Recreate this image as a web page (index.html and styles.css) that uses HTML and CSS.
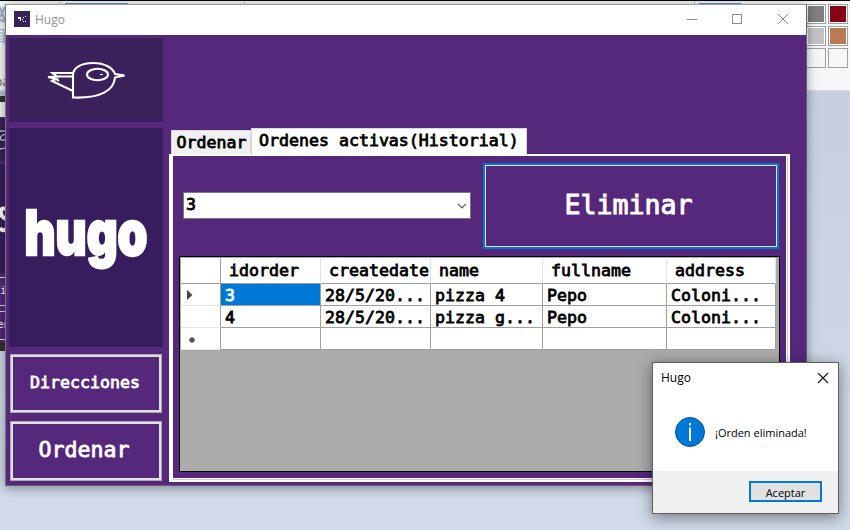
FILE: index.html
```html
<!DOCTYPE html>
<html lang="es">
<head>
<meta charset="utf-8">
<title>Hugo</title>
<link rel="stylesheet" href="styles.css">
</head>
<body>
<div class="desktop">
  <div class="ribbon">
    <svg class="ribbon-left" width="6" height="90" viewBox="0 0 6 90">
      <path d="M0 6l5 15M5 6L0 16M0 18l3 3" stroke="#9fb0cc" stroke-width="2" fill="none"/>
      <path d="M0 28.500h4v12H0M4 32.500h2M4 32v11h2M0 32h3M0 35h3M0 38h3" stroke="#9fb3d2" fill="none"/>
    </svg>
    <span class="ribbon-label">pa</span>
    <i class="strip strip-a"></i><i class="strip strip-b"></i>
    <i class="tick tick-a"></i><i class="tick tick-b"></i><i class="tick tick-c"></i>
    <div class="palette">
      <i class="gray"></i><i class="red"></i><i class="silver"></i><i class="brown"></i><i></i><i></i>
    </div>
  </div>
  <svg class="behind" width="6" height="260" viewBox="0 0 6 260">
    <rect width="6" height="6" fill="#b5c3d5"/><rect y="5" width="6" height="6" fill="#303437"/>
    <rect y="11" width="6" height="15" fill="#f2f2f2"/><rect y="26" width="6" height="225" fill="#55287d"/>
    <rect y="27" width="6" height="43" fill="#38205b"/><rect y="73" width="6" height="109" fill="#371c5d"/>
    <path d="M0 40h6M6 43Q-2 45 1 49H6M0 58q4 0 6-2" fill="none" stroke="#fff"/>
    <path d="M6 118q-6-2-5 4q0 4 5 6M0 137q3 4 6 1" fill="none" stroke="#fff" stroke-width="4"/>
    <path d="M0 186.500h6M0 214.500h6M0 220.500h6M0 248.500h6" stroke="#ddd"/>
    <text x="0" y="203" class="behind-text">i</text><text x="-3" y="237" class="behind-text">en</text>
    <rect y="251" width="6" height="9" fill="#303030"/>
  </svg>

  <main class="window">
    <header class="titlebar">
      <svg class="app-icon" width="16" height="16" viewBox="0 0 16 16"><rect width="16" height="16" fill="#38205b"/><path d="M4 6h3v4H6V8H4zM8 8h1v1H8zM9 6h1v1H9zM11 5h1v1h-1zM9 10h1v1H9zM11 10h1v1h-1z" fill="#fff"/></svg>
      <span class="title">Hugo</span>
      <svg class="controls" width="138" height="30" viewBox="0 0 138 30" fill="none" stroke="#8f8f8f"><path d="M19 14.500h10"/><rect x="64.500" y="9.500" width="9" height="9"/><path d="M110 9l10 10M120 9l-10 10"/></svg>
    </header>
    <div class="content">
      <aside class="sidebar">
        <div class="bird">
          <svg width="154" height="84" viewBox="0 0 154 84" fill="none" stroke="#fff" stroke-width="2.100">
            <path d="M64 59.500V36C65 29 73 25 84 25C96 25 104 30 106 36L115.500 37.500L106 39.500C105 52 92 60.500 64 59.500Z"/>
            <path d="M64 35H43.500L48 38.500H64M43.500 35L48 38.500L39 39L47 41L43 43L64 53M47 41L50 43"/>
            <ellipse cx="88.500" cy="36.500" rx="10.500" ry="5.700"/><path d="M91 36.500h3" stroke-width="1.200"/>
          </svg>
        </div>
        <div class="logo">
          <svg width="154" height="219" viewBox="0 0 154 219"><text class="logo-text" x="15.500" y="127" textLength="123" lengthAdjust="spacingAndGlyphs">hugo</text></svg>
        </div>
        <button class="nav">Direcciones</button>
        <button class="nav nav-large">Ordenar</button>
      </aside>
      <section class="tabs">
        <div class="tab-row"><span class="tab">Ordenar</span><span class="tab active">Ordenes activas(Historial)</span></div>
        <div class="tab-page">
          <div class="actions">
            <div class="combo"><span>3</span><svg width="10" height="6" viewBox="0 0 10 6"><path d="M1 .8l4 4 4-4" fill="none" stroke="#555" stroke-width="1.200"/></svg></div>
            <button class="delete">Eliminar</button>
          </div>
          <div class="grid-box">
            <div class="grid">
              <b class="rh top"></b><b class="th">idorder</b><b class="th">createdate</b><b class="th">name</b><b class="th">fullname</b><b class="th">address</b>
              <b class="rh"><svg width="6" height="10" viewBox="0 0 6 10"><path d="M0 0l5.500 5L0 10z" fill="#444"/></svg></b><span class="selected">3</span><span>28/5/20...</span><span>pizza 4</span><span>Pepo</span><span>Coloni...</span>
              <b class="rh"></b><span>4</span><span>28/5/20...</span><span>pizza g...</span><span>Pepo</span><span>Coloni...</span>
              <b class="rh new"><svg width="6" height="6" viewBox="0 0 6 6"><path d="M3 0v6M0 3h6M1 1l4 4M5 1L1 5" stroke="#555" stroke-width="1.300"/></svg></b><span></span><span></span><span></span><span></span><span></span>
            </div>
          </div>
        </div>
      </section>
    </div>
  </main>

  <div class="dialog">
    <header class="dialog-head"><span>Hugo</span><svg width="12" height="12" viewBox="0 0 12 12"><path d="M1 1l10 10M11 1L1 11" stroke="#111" stroke-width="1.100"/></svg></header>
    <div class="dialog-body">
      <svg width="30" height="30" viewBox="0 0 30 30"><circle cx="15" cy="15" r="14.500" fill="#0078d7" stroke="#075493"/><path d="M14 6h2v2.500h-2zM14 10.500h2V24h-2z" fill="#fff"/></svg>
      <span class="message">¡Orden eliminada!</span>
    </div>
    <footer class="dialog-foot"><button class="accept">Aceptar</button></footer>
  </div>
</div>
</body>
</html>
```
FILE: styles.css
```css
* { box-sizing: border-box; }
body { margin: 0; }
button { margin: 0; padding: 0; background: #55287b; color: #fff; font: inherit; }
svg { display: block; flex: none; }
.desktop {
  position: relative; width: 850px; height: 530px; overflow: hidden;
  background: linear-gradient(#c5cfe0 90px, #d0dae8 480px);
  font-family: "DejaVu Sans Mono", monospace; font-size: 16.6px;
}
.ribbon { position: relative; height: 91px; background: #f5f6f7; border-top: 1px solid #000; border-bottom: 1px solid #dadbdc; }
.ribbon-left { position: absolute; left: 0; top: 0; }
.ribbon-label { position: absolute; left: -5px; top: 72px; font: 12px "Open Sans", sans-serif; color: #555; }
.strip { position: absolute; top: 2px; height: 2px; background: #6595d0; }
.strip-a { left: 65px; width: 63px; }
.strip-b { left: 699px; width: 42px; }
.tick { position: absolute; top: 0; width: 1px; height: 4px; background: #ccc; }
.tick-a { left: 60px; }
.tick-b { left: 244px; }
.tick-c { left: 694px; }
.palette { position: absolute; left: 806px; top: 3px; display: grid; grid-template-columns: 20px 20px; gap: 2px; }
.palette i { height: 20px; border: 1px solid #a0a0a0; background: #f5f6f7; }
.palette .gray, .palette .red, .palette .silver, .palette .brown { box-shadow: inset 0 0 0 1px #fff; }
.palette .gray { background: #7f7f7f; }
.palette .red { background: #880015; }
.palette .silver { background: #c3c3c3; }
.palette .brown { background: #b97a57; }
.behind { position: absolute; left: 0; top: 91px; height: 260px; }
.behind-text { fill: #fff; font-size: 11px; }

.window {
  position: absolute; left: 5px; top: 4px; width: 802px; height: 482px;
  display: flex; flex-direction: column; border: 1px solid #858585; border-color: #999 #6b5a7c #6b5a7c #777;
  background: #55287b; box-shadow: 0 2px 10px #0006;
}
.titlebar { height: 30px; flex: none; display: flex; align-items: center; background: #fff; padding-left: 8px; color: #929292; font: 12px "Open Sans", sans-serif; }
.app-icon { margin-top: -2px; }
.title { margin-left: 5px; flex: 1; line-height: 28px; }
.content { flex: 1; display: flex; padding: 3px; }
.sidebar { width: 154px; display: flex; flex-direction: column; align-items: center; }
.bird { height: 84px; background: #3b215c; }
.logo { height: 219px; margin: 6px 0 7px; background: #381d5e; }
.logo-text { font-family: Inter, sans-serif; font-weight: 900; font-size: 62px; fill: #fff; stroke: #fff; stroke-width: 2.5px; }
.nav { width: 152px; height: 59px; border: 1px solid #aaa; box-shadow: inset 0 0 0 2px #e1e1e1; padding: 0 2px 2px 0; -webkit-text-stroke: .8px #fff; }
.nav-large { height: 60px; margin-top: 8px; padding: 0 4px 3px 0; font-size: 21.6px; }
.tabs { margin: 90px 0 0 6px; width: 621px; height: 354px; display: flex; flex-direction: column; }
.tab-row { height: 26px; display: flex; align-items: flex-end; padding-left: 2px; }
.tab { width: 80px; height: 24px; border: 1px solid #d9d9d9; border-bottom: 0; background: #f0f0f0; padding-left: 4.500px; line-height: 23px; white-space: nowrap; -webkit-text-stroke: .8px #000; }
.tab.active { width: 276px; height: 27px; margin-bottom: -1px; padding-left: 7px; background: #fff; z-index: 1; line-height: 23px; }
.tab-page { height: 328px; border: solid #fff; border-width: 2px 2px 2px 4px; background: #55287b; box-shadow: inset -1px -1px #ccc, inset -2px -2px #fff; padding: 7px 6px; }
.actions { display: flex; padding-left: 4px; height: 93px; }
.combo { width: 288px; height: 27px; margin: 29px 12px 0 0; border: 1px solid #7a7a7a; background: #fff; display: flex; align-items: center; justify-content: space-between; padding: 0 3px 0 2px; -webkit-text-stroke: .8px #000; }
.combo span { line-height: 22px; margin-top: -2px; }
.delete { width: 296px; height: 86px; border: 2px solid #0078d7; box-shadow: inset 0 0 0 1px #e5e5e5; font-size: 26.6px; padding: 0 5px 4px 0; -webkit-text-stroke: 1px #fff; }
.grid-box { width: 601px; height: 216px; border: 1px solid #000; background: #ababab; padding: 1px; }
.grid { display: grid; width: 595px; grid-template-columns: 40px 100px 110px 112px 124px 109px; grid-template-rows: 26px 22px 22px 22px; -webkit-text-stroke: .8px #000; }
.grid > * { background: #fff; border: solid #a0a0a0; border-width: 0 1px 1px 0; padding-left: 4px; line-height: 23px; white-space: nowrap; overflow: hidden; font-weight: 400; }
.grid .th { padding-left: 8px; line-height: 26px; border-right-color: #e5e5e5; }
.grid .rh { display: flex; align-items: center; padding-left: 6px; border-bottom-color: #e5e5e5; }
.grid .top { border-bottom-color: #a0a0a0; }
.grid .new { padding: 2px 0 0 8px; }
.grid .selected { background: #0078d7; color: #fff; -webkit-text-stroke-color: #fff; }

.dialog { position: absolute; left: 652px; top: 362px; width: 187px; height: 152px; border: 1px solid #606060; background: #fff; box-shadow: 0 3px 14px #0007; font: 12px "Open Sans", sans-serif; color: #000; display: flex; flex-direction: column; }
.dialog-head { display: flex; justify-content: space-between; align-items: center; height: 29px; padding: 0 9px 0 8px; }
.dialog-body { flex: 1; display: flex; align-items: center; padding-left: 22px; gap: 10px; }
.message { font-size: 11px; white-space: nowrap; padding-top: 2px; }
.dialog-foot { height: 42px; background: #f0f0f0; display: flex; justify-content: flex-end; padding: 10px 16px; }
.accept { width: 73px; height: 21px; border: 2px solid #0078d7; background: #e1e1e1; color: #000; font-size: 11px; line-height: 16px; padding-top: 2px; }
```
